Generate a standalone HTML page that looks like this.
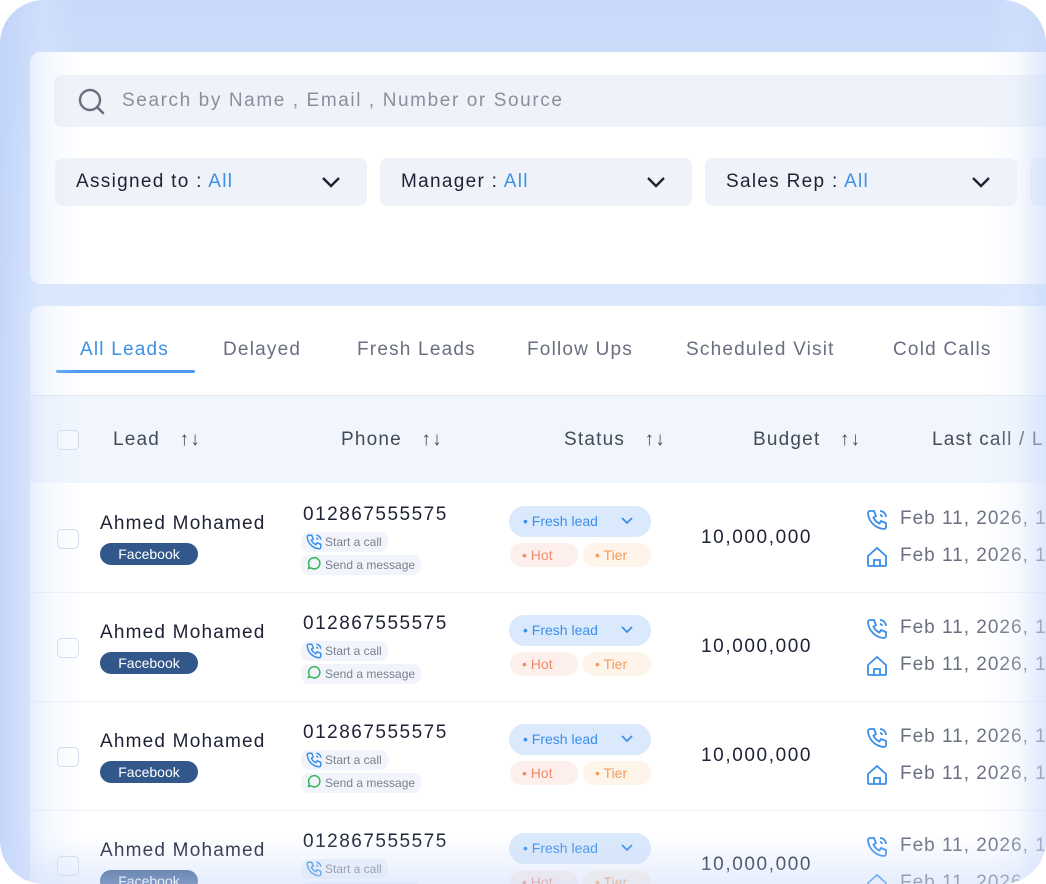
<!DOCTYPE html>
<html><head><meta charset="utf-8"><style>
*{box-sizing:border-box;margin:0;padding:0}
body{width:1046px;height:884px;overflow:hidden;background:#fff;font-family:"Liberation Sans",sans-serif;position:relative}
#frame{position:absolute;left:0;top:0;width:1046px;height:884px;border-radius:44px;overflow:hidden;background:linear-gradient(180deg,#c8d9fa 0%,#dfeafc 40%,#dbe7fc 100%)}
.abs{position:absolute}
.panel{position:absolute;background:#fff}
.t{position:absolute;white-space:nowrap;letter-spacing:.5px}
.dd{position:absolute;top:158px;height:48px;background:#eff3f9;border-radius:8px;font-size:19px;color:#1e2235}
.dd span.l{position:absolute;left:21px;top:13px;letter-spacing:1.3px}
.dd b{font-weight:normal;color:#3b8fe8}
.chev{position:absolute;top:17px}
.tab{position:absolute;top:339px;font-size:19px;color:#6a6f80;letter-spacing:1.2px}
.hd{position:absolute;top:429px;font-size:19px;color:#454a5a;letter-spacing:1.2px}
.cb{position:absolute;width:22px;height:20px;border:1.5px solid #d3dcec;border-radius:5px;background:#fff}
.name{font-size:19px;color:#1e2235;letter-spacing:1.2px}
.fb{position:absolute;width:98px;height:22px;border-radius:11px;background:#32578a;color:#fff;font-size:14px;text-align:center;line-height:22px}
.ph{font-size:19px;color:#1e2235;letter-spacing:1.5px}
.small{position:absolute;font-size:12px;color:#7a7f8f;background:#f1f5fb;border-radius:8px;height:20px;line-height:20px;padding:0 6px 0 24px}
.fresh{position:absolute;width:142px;height:31px;border-radius:16px;background:#dbe9fc;color:#3b8fe8;font-size:14px;line-height:31px;padding-left:14px}
.hot{position:absolute;height:24px;border-radius:12px;background:#fdf0ec;color:#ef8a6c;font-size:14px;line-height:24px;padding-left:12px}
.tier{position:absolute;height:24px;border-radius:12px;background:#fef4ea;color:#f29b5c;font-size:14px;line-height:24px;padding-left:12px}
.bud{font-size:19px;color:#1e2235;letter-spacing:1.6px}
.date{font-size:19px;color:#6a6f80;letter-spacing:1px}
</style></head><body>
<div id="frame">
<div class="panel" style="left:30px;top:52px;width:1030px;height:232px;border-radius:10px 0 0 10px"></div>
<div class="abs" style="left:54px;top:75px;width:1000px;height:52px;background:#eff3f9;border-radius:8px"></div>
<svg class="abs" style="left:77px;top:88px" width="30" height="28" viewBox="0 0 30 28"><circle cx="13" cy="12" r="10" fill="none" stroke="#6a6f80" stroke-width="2.4"/><path d="M20 19l6 6" stroke="#6a6f80" stroke-width="2.6" stroke-linecap="round"/></svg>
<div class="t" style="left:122px;top:90px;font-size:19px;color:#8a8f9d;letter-spacing:1.6px">Search by Name , Email , Number or Source</div>

<div class="dd" style="left:55px;width:312px"><span class="l">Assigned to : <b>All</b></span><svg class="chev" style="left:265px" width="22" height="14"><path d="M3 3l8 8 8-8" fill="none" stroke="#1e2235" stroke-width="2.4"/></svg></div>
<div class="dd" style="left:380px;width:312px"><span class="l">Manager : <b>All</b></span><svg class="chev" style="left:265px" width="22" height="14"><path d="M3 3l8 8 8-8" fill="none" stroke="#1e2235" stroke-width="2.4"/></svg></div>
<div class="dd" style="left:705px;width:312px"><span class="l">Sales Rep : <b>All</b></span><svg class="chev" style="left:265px" width="22" height="14"><path d="M3 3l8 8 8-8" fill="none" stroke="#1e2235" stroke-width="2.4"/></svg></div>
<div class="dd" style="left:1030px;width:40px"></div>

<div class="panel" style="left:30px;top:306px;width:1030px;height:600px;border-radius:10px 0 0 0"></div>
<div class="tab" style="left:80px;color:#3b8fe8">All Leads</div>
<div class="abs" style="left:56px;top:370px;width:139px;height:3px;background:#4b9af0;border-radius:2px"></div>
<div class="tab" style="left:223px">Delayed</div>
<div class="tab" style="left:357px">Fresh Leads</div>
<div class="tab" style="left:527px">Follow Ups</div>
<div class="tab" style="left:686px">Scheduled Visit</div>
<div class="tab" style="left:893px">Cold Calls</div>

<div class="abs" style="left:30px;top:395px;width:1030px;height:88px;background:#f1f6fd;border-top:1px solid #e1e7f0"></div>
<div class="cb" style="left:57px;top:430px;background:#f8fafd"></div>
<div class="hd" style="left:113px">Lead &nbsp;&nbsp;↑↓</div>
<div class="hd" style="left:341px">Phone &nbsp;&nbsp;↑↓</div>
<div class="hd" style="left:564px">Status &nbsp;&nbsp;↑↓</div>
<div class="hd" style="left:753px">Budget &nbsp;&nbsp;↑↓</div>
<div class="hd" style="left:932px">Last call / L</div>

<div id="rows"></div>

<div class="abs" style="left:0;top:0;width:80px;height:884px;background:linear-gradient(90deg,rgba(190,210,250,.8),rgba(220,232,253,.35) 55%,rgba(255,255,255,0))"></div>
<div class="abs" style="right:0;top:0;width:60px;height:884px;background:linear-gradient(270deg,rgba(200,218,250,.6),rgba(225,235,253,.25) 50%,rgba(255,255,255,0))"></div>
<div class="abs" style="left:0;bottom:0;width:1046px;height:50px;background:linear-gradient(0deg,rgba(205,220,250,.5),rgba(255,255,255,0))"></div>
</div>
<script>
var h='';
var ys=[538,647,756,865];
var callIc='<svg width="18" height="18" viewBox="0 0 24 24" fill="none" stroke="#3b8fe8" stroke-width="2"><path d="M5 3h4l2 5-2.5 1.5a11 11 0 0 0 6 6L16 13l5 2v4a2 2 0 0 1-2 2A17 17 0 0 1 3 5a2 2 0 0 1 2-2z"/><path d="M15 3a6 6 0 0 1 6 6M15 7a2 2 0 0 1 2 2"/></svg>';
var bigCall='<svg width="26" height="24" viewBox="0 0 24 24" fill="none" stroke="#3b8fe8" stroke-width="1.8"><path d="M5 3h4l2 5-2.5 1.5a11 11 0 0 0 6 6L16 13l5 2v4a2 2 0 0 1-2 2A17 17 0 0 1 3 5a2 2 0 0 1 2-2z"/><path d="M15 3a6 6 0 0 1 6 6M15 7a2 2 0 0 1 2 2"/></svg>';
var house='<svg width="26" height="24" viewBox="0 0 24 24" fill="none" stroke="#3b8fe8" stroke-width="1.8"><path d="M3 11l9-8 9 8v9a1 1 0 0 1-1 1H4a1 1 0 0 1-1-1z"/><path d="M9 21v-6h6v6"/></svg>';
var wa='<svg width="15" height="15" viewBox="0 0 24 24" fill="none" stroke="#39b45a" stroke-width="2.4"><path d="M4 20l1.3-4A9 9 0 1 1 8 19z"/></svg>';
ys.forEach(function(y){
h+='<div class="cb" style="left:57px;top:'+(y-9)+'px"></div>';
h+='<div class="t name" style="left:100px;top:'+(y-25)+'px;width:170px;overflow:hidden">Ahmed Mohamed</div>';
h+='<div class="fb" style="left:100px;top:'+(y+5)+'px">Facebook</div>';
h+='<div class="t ph" style="left:303px;top:'+(y-34)+'px">012867555575</div>';
h+='<div class="small" style="left:301px;top:'+(y-6)+'px"><span style="position:absolute;left:4px;top:1px">'+callIc+'</span>Start a call</div>';
h+='<div class="small" style="left:301px;top:'+(y+17)+'px"><span style="position:absolute;left:5px;top:1px">'+wa+'</span>Send a message</div>';
h+='<div class="fresh" style="left:509px;top:'+(y-32)+'px">• Fresh lead <svg style="position:absolute;left:112px;top:11px" width="12" height="8"><path d="M1 1l5 5 5-5" fill="none" stroke="#3b8fe8" stroke-width="1.8"/></svg></div>';
h+='<div class="hot" style="left:510px;top:'+(y+5)+'px;width:68px">• Hot</div>';
h+='<div class="tier" style="left:583px;top:'+(y+5)+'px;width:68px">• Tier</div>';
h+='<div class="t bud" style="left:701px;top:'+(y-11)+'px">10,000,000</div>';
h+='<div class="abs" style="left:864px;top:'+(y-30)+'px">'+bigCall+'</div>';
h+='<div class="t date" style="left:900px;top:'+(y-30)+'px">Feb 11, 2026, 11:00</div>';
h+='<div class="abs" style="left:864px;top:'+(y+7)+'px">'+house+'</div>';
h+='<div class="t date" style="left:900px;top:'+(y+7)+'px">Feb 11, 2026, 11:00</div>';
if(y<865)h+='<div class="abs" style="left:30px;top:'+(y+54)+'px;width:1030px;height:1px;background:#eef1f6"></div>';
});
document.getElementById('rows').innerHTML=h;
</script>
</body></html>
